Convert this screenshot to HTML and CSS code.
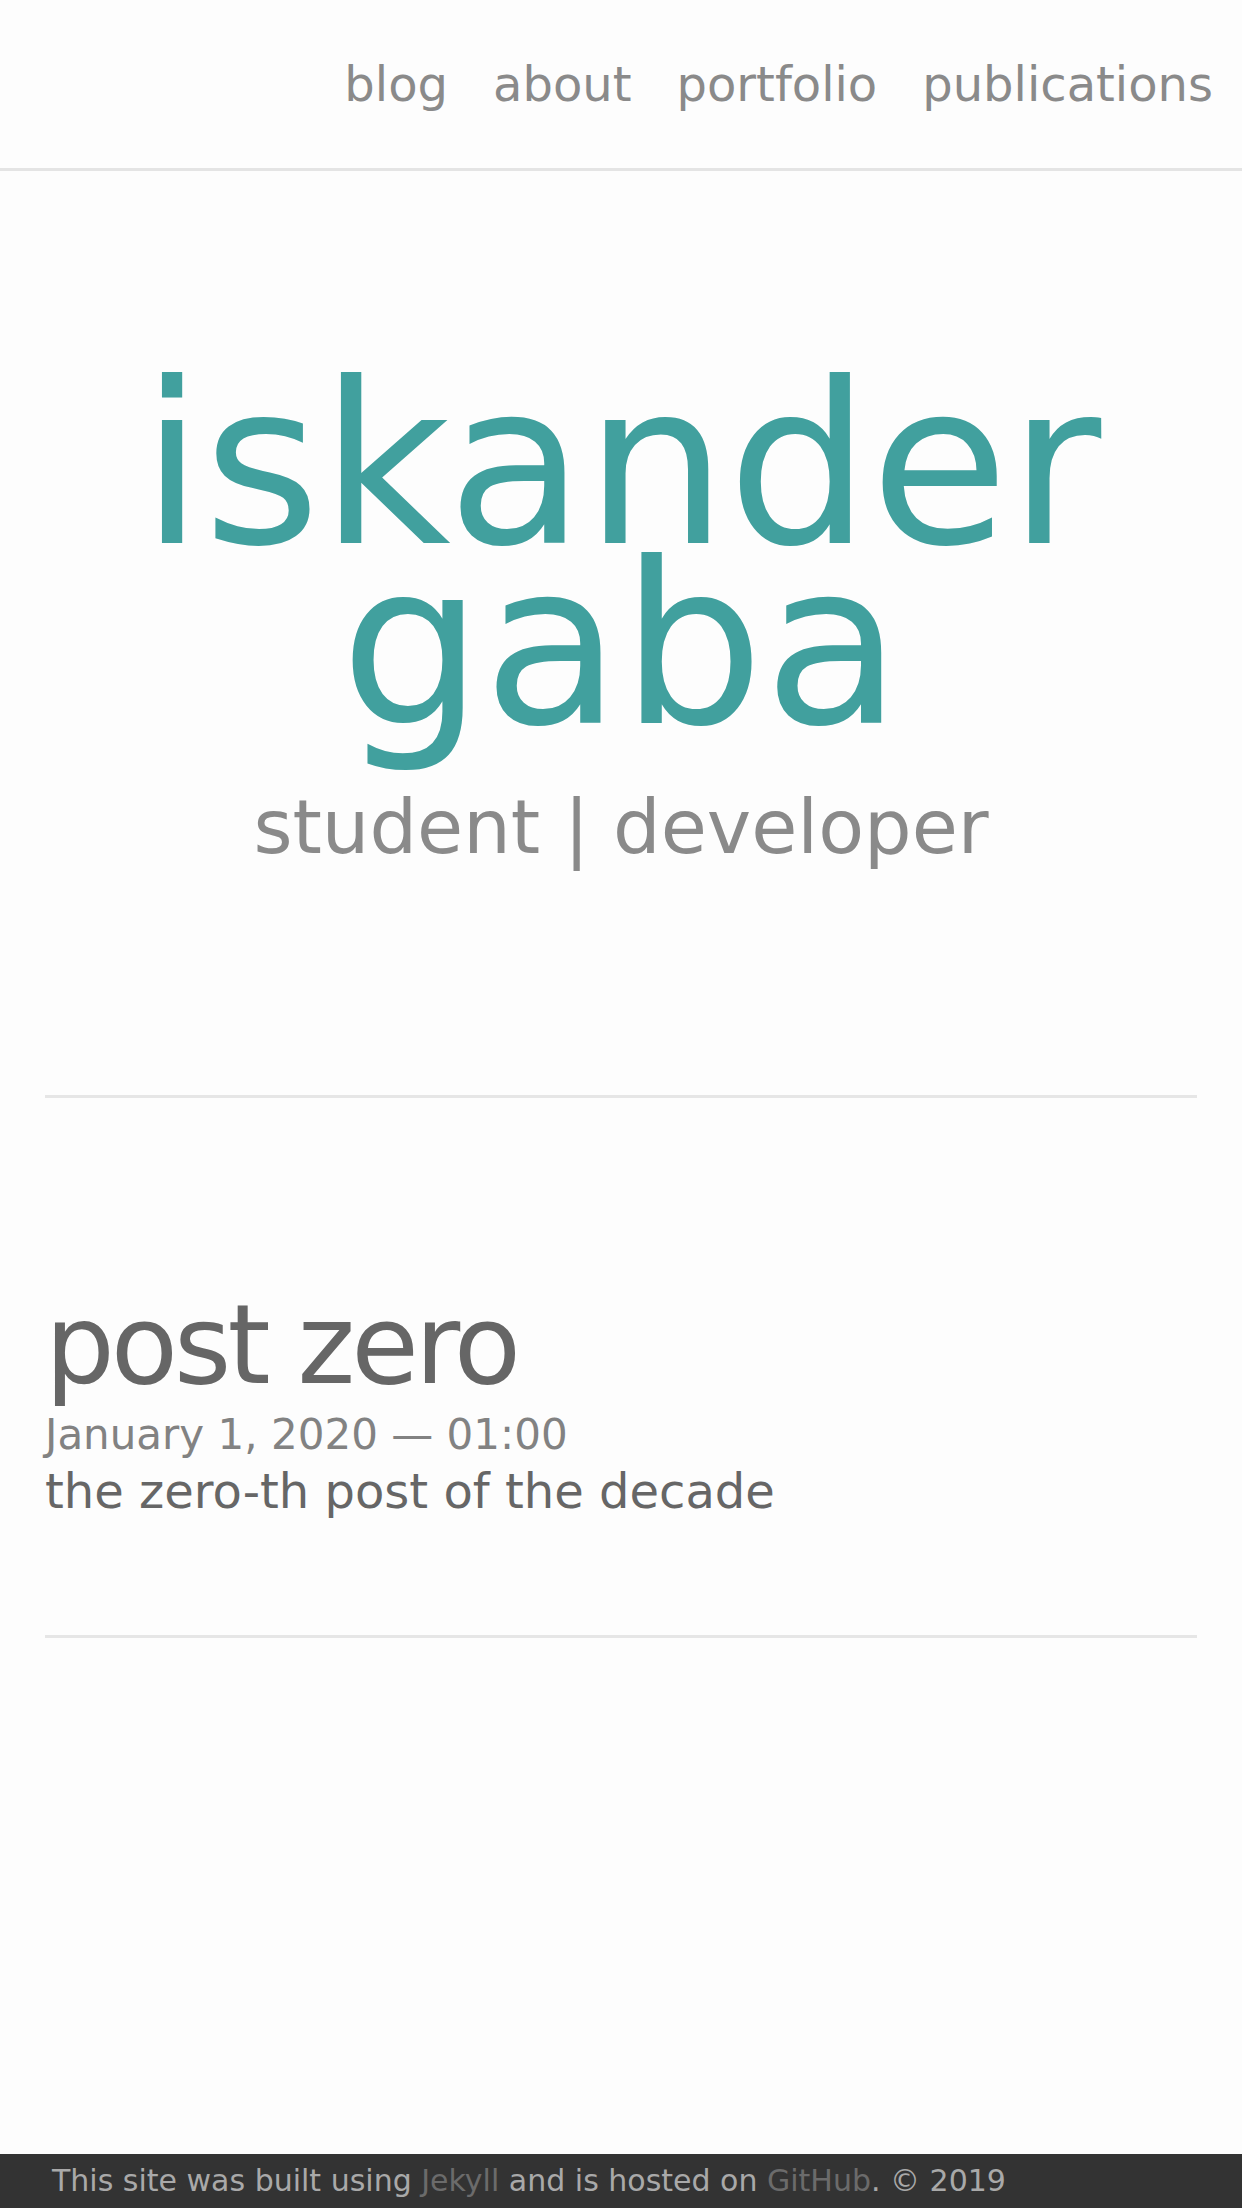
FILE: index.html
```html
<!DOCTYPE html>
<html lang="en">
<head>
<meta charset="utf-8">
<title>iskander gaba</title>
<link rel="stylesheet" href="styles.css">
</head>
<body>
<header class="site-header">
  <nav class="site-nav">
    <a class="nav-link" href="#">blog</a>
    <a class="nav-link" href="#">about</a>
    <a class="nav-link" href="#">portfolio</a>
    <a class="nav-link" href="#">publications</a>
  </nav>
</header>

<section class="hero">
  <h1 class="hero-title">iskander<br>gaba</h1>
  <p class="hero-subtitle">student | developer</p>
</section>

<main class="content">
  <hr class="rule">
  <article class="post">
    <h2 class="post-title">post zero</h2>
    <div class="post-date">January 1, 2020 — 01:00</div>
    <p class="post-excerpt">the zero-th post of the decade</p>
  </article>
  <hr class="rule">
</main>

<footer class="site-footer">
  <p class="footer-text">This site was built using <a class="footer-link" href="#">Jekyll</a> and is hosted on <a class="footer-link" href="#">GitHub</a>. © 2019</p>
</footer>
</body>
</html>
```

FILE: styles.css
```css
html, body {
  margin: 0;
  padding: 0;
}

body {
  min-height: 100vh;
  display: flex;
  flex-direction: column;
  background: #fdfdfd;
  font-family: "DejaVu Sans", sans-serif;
  color: #666666;
}

a {
  text-decoration: none;
}

.site-header {
  height: 168px;
  border-bottom: 3px solid #e4e4e4;
  display: flex;
  align-items: center;
  justify-content: flex-end;
  padding-right: 29px;
}

.site-nav {
  display: flex;
  gap: 45px;
}

.nav-link {
  font-size: 48px;
  line-height: 56px;
  color: #8a8a8a;
}

.hero {
  padding-top: 204px;
  text-align: center;
}

.hero-title {
  margin: 0;
  font-size: 225px;
  line-height: 180px;
  font-weight: normal;
  color: #41a09e;
}

.hero-subtitle {
  margin: 47px 0 0;
  font-size: 75px;
  line-height: 90px;
  color: #8a8a8a;
}

.content {
  padding: 0 45px;
  margin-top: 223px;
}

.rule {
  margin: 0;
  border: 0;
  border-top: 3px solid #e6e6e6;
  height: 0;
}

.post {
  padding-top: 183px;
  padding-bottom: 114px;
}

.post-title {
  margin: 0;
  font-size: 110px;
  line-height: 128px;
  letter-spacing: -4px;
  font-weight: normal;
  color: #666666;
}

.post-date {
  font-size: 42px;
  line-height: 52px;
  color: #828282;
}

.post-excerpt {
  margin: 0;
  font-size: 48px;
  line-height: 60px;
  color: #666666;
}

.site-footer {
  margin-top: auto;
  background: #333333;
  height: 54px;
  padding-left: 52px;
}

.footer-text {
  margin: 0;
  font-size: 30px;
  line-height: 54px;
  color: #a9a9a9;
}

.footer-link {
  color: #6b6b6b;
}
```
